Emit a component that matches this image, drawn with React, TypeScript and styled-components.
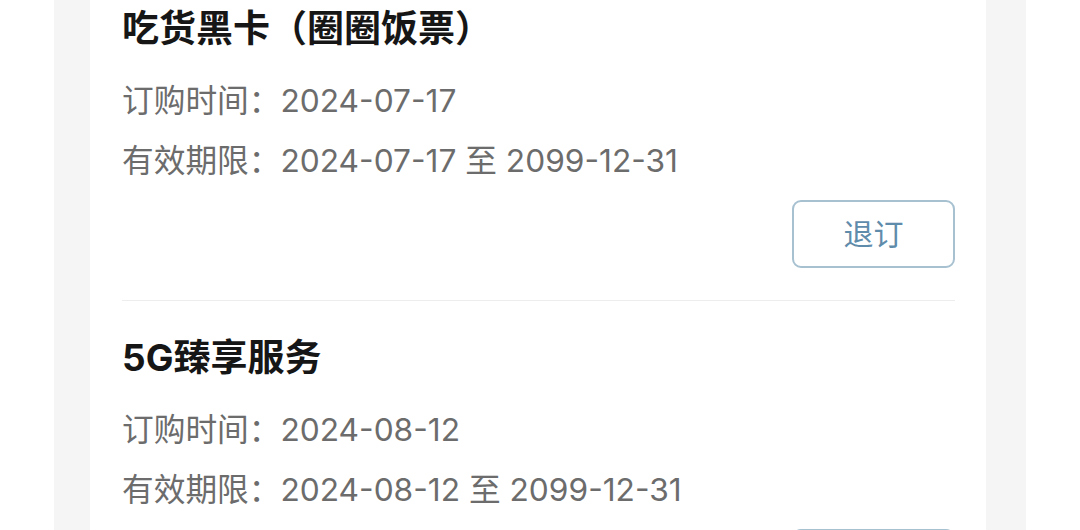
import React from 'react';
import styled, { createGlobalStyle } from 'styled-components';

const GlobalStyle = createGlobalStyle`
  html, body {
    margin: 0;
    padding: 0;
    background: #ffffff;
    font-family: "Noto Sans CJK SC", "Noto Sans", sans-serif;
  }
  * {
    box-sizing: border-box;
  }
`;

interface Order {
    name: string;
    orderedAt: string;
    validFrom: string;
    validTo: string;
}

const orders: Order[] = [
    { name: '吃货黑卡（圈圈饭票）', orderedAt: '2024-07-17', validFrom: '2024-07-17', validTo: '2099-12-31' },
    { name: '5G臻享服务', orderedAt: '2024-08-12', validFrom: '2024-08-12', validTo: '2099-12-31' },
];

const App: React.FC = () => {
    return (
        <>
            <GlobalStyle />
            <Page>
                <Screen>
                    <Card>
                        {orders.map((o) => (
                            <Item key={o.name}>
                                <Title>{o.name}</Title>
                                <InfoLine>订购时间：{o.orderedAt}</InfoLine>
                                <InfoLine>有效期限：{o.validFrom} 至 {o.validTo}</InfoLine>
                                <Actions>
                                    <UnsubscribeButton>退订</UnsubscribeButton>
                                </Actions>
                            </Item>
                        ))}
                    </Card>
                </Screen>
            </Page>
        </>
    );
};

const Page = styled.div`
  width: 1080px;
  height: 530px;
  overflow: hidden;
  padding: 0 54px;
  background: #ffffff;
`;

const Screen = styled.div`
  height: 100%;
  background: #f5f5f5;
  padding: 0 40px 0 36px;
  overflow: hidden;
`;

const Card = styled.div`
  background: #ffffff;
  padding: 0 31px 0 32px;
  margin-top: -28px;
`;

const Item = styled.div`
  padding: 35px 0 32px;
  border-bottom: 1px solid #ededed;
`;

const Title = styled.div`
  font-family: "Inter", "Noto Sans CJK SC", sans-serif;
  font-size: 37px;
  line-height: 44px;
  font-weight: 700;
  color: #161616;
  margin-bottom: 20px;
`;

const InfoLine = styled.div`
  font-family: "Inter", "Noto Sans CJK SC", sans-serif;
  font-size: 31.7px;
  line-height: 60px;
  color: #6c6c6c;
  white-space: nowrap;
`;

const Actions = styled.div`
  display: flex;
  justify-content: flex-end;
  margin-top: 9px;
`;

const UnsubscribeButton = styled.button`
  width: 163px;
  height: 68px;
  padding: 0 0 4px;
  border: 2px solid #a7c1d1;
  border-radius: 9px;
  background: #ffffff;
  color: #5f8cab;
  font-family: inherit;
  font-size: 30px;
  cursor: pointer;
`;

export default App;
